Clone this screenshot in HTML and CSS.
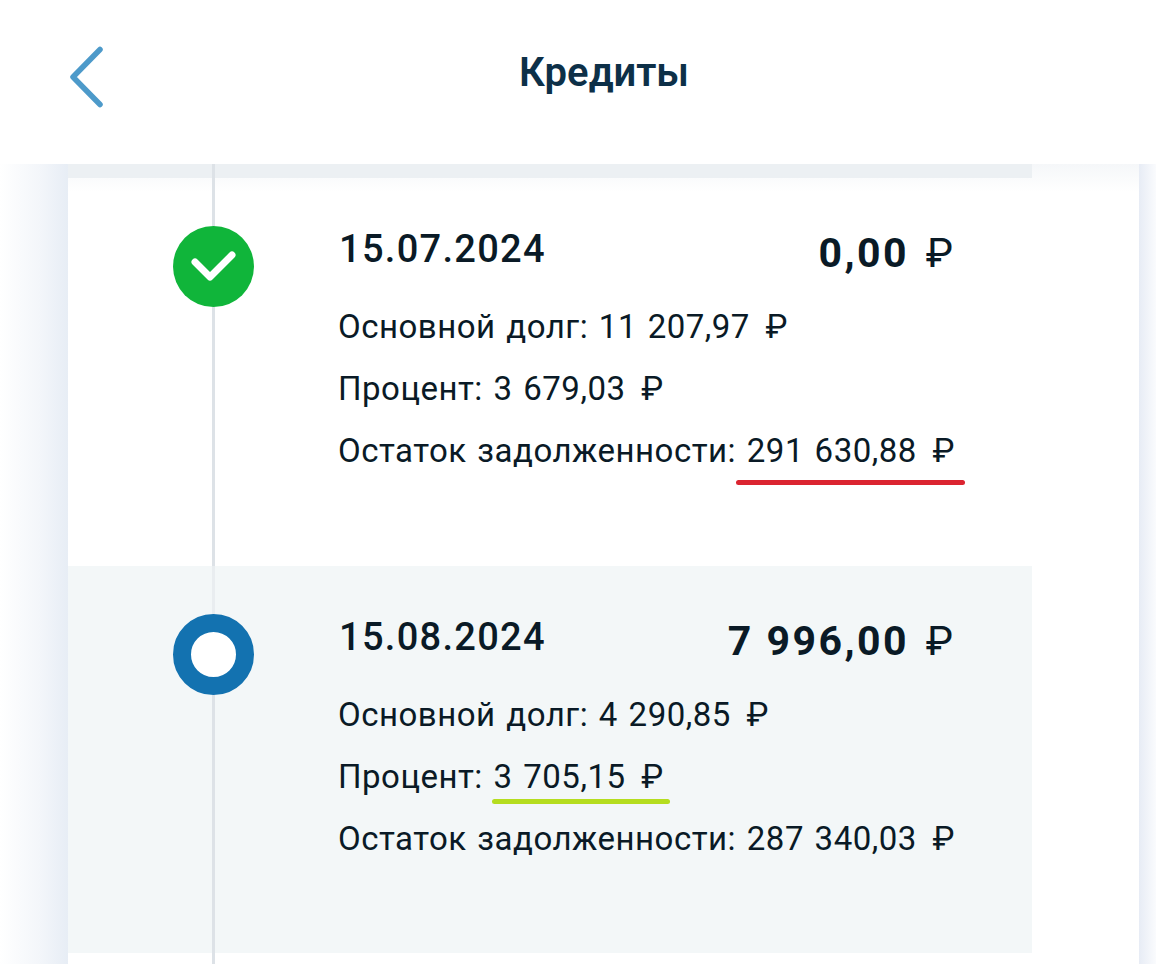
FILE: index.html
```html
<!DOCTYPE html>
<html lang="ru">
<head>
<meta charset="utf-8">
<title>Кредиты</title>
<link rel="stylesheet" href="styles.css">
</head>
<body>
<header class="header">
  <svg class="back" width="36" height="62" viewBox="0 0 36 62" aria-hidden="true"><path d="M32 3.5 L5 31 L32 58.5" fill="none" stroke="#4d9aca" stroke-width="5.5" stroke-linecap="round" stroke-linejoin="round"/></svg>
  <h1 class="title">Кредиты</h1>
</header>
<main class="sheet">
  <div class="panel">
    <div class="timeline"></div>
    <div class="strip"></div>
    <section class="row">
      <div class="marker">
        <svg width="81" height="81" viewBox="0 0 81 81" aria-hidden="true"><circle cx="40.5" cy="40.5" r="40.5" fill="#10b53a"/><path d="M22 36 L37 51 L59 29" fill="none" stroke="#fff" stroke-width="7" stroke-linecap="round" stroke-linejoin="round"/></svg>
      </div>
      <div class="body">
        <div class="top"><span class="date">15.07.2024</span><span class="sum">0,00 <span class="rub">₽</span></span></div>
        <p class="line">Основной долг: 11 207,97 <span class="rub">₽</span></p>
        <p class="line">Процент: 3 679,03 <span class="rub">₽</span></p>
        <p class="line">Остаток задолженности: <span class="mark mark-red">291 630,88 <span class="rub">₽</span></span></p>
      </div>
    </section>
    <section class="row row-active">
      <div class="marker"><span class="ring"></span></div>
      <div class="body">
        <div class="top"><span class="date">15.08.2024</span><span class="sum">7 996,00 <span class="rub">₽</span></span></div>
        <p class="line">Основной долг: 4 290,85 <span class="rub">₽</span></p>
        <p class="line">Процент: <span class="mark mark-green">3 705,15 <span class="rub">₽</span></span></p>
        <p class="line">Остаток задолженности: 287 340,03 <span class="rub">₽</span></p>
      </div>
    </section>
  </div>
</main>
</body>
</html>
```

FILE: styles.css
```css
* { box-sizing: border-box; }
html, body { margin: 0; padding: 0; }
body {
  width: 1156px;
  height: 964px;
  overflow: hidden;
  background: #fff;
  font-family: "Roboto", "Liberation Sans", sans-serif;
  color: #0a1a26;
}
.header {
  height: 164px;
  display: flex;
  align-items: center;
  justify-content: center;
  padding: 0 0 19px 52px;
  position: relative;
  background: #fff;
}
.back { position: absolute; left: 68px; top: 46px; }
.title {
  margin: 0;
  font-size: 40px;
  font-weight: 600;
  color: #0d3048;
}
.sheet {
  height: 800px;
  padding: 0 17px 0 68px;
  background: linear-gradient(to right, #fff 0, #f3f6fa 40px, #e7edf5 68px, #fff 68px);
  position: relative;
}
.sheet::after {
  content: "";
  position: absolute;
  left: 1139px; right: 0; top: 0; bottom: 0;
  background: linear-gradient(to right, #e7ecf5, #fafbfd);
}
.panel {
  height: 100%;
  position: relative;
  background: linear-gradient(to bottom, #f5f7f9 0, #fff 28px);
}
.timeline {
  position: absolute;
  left: 144px; top: 0; bottom: 0;
  width: 3px;
  background: #dde2e7;
  z-index: 1;
}
.strip { height: 14px; width: 964px; background: #ecf0f3; }
.row {
  width: 964px;
  height: 388px;
  display: flex;
}
.row-active { background: #f3f7f8; height: 387px; }
.marker { width: 270px; padding: 48px 0 0 105px; position: relative; z-index: 2; }
.row-active .marker::before {
  content: "";
  position: absolute;
  left: 144px; top: 0;
  width: 3px; height: 48px;
  background: #e9edf0;
}
.marker svg { display: block; }
.ring {
  display: block;
  width: 81px; height: 81px;
  border-radius: 50%;
  border: 18px solid #1372b0;
  background: #fff;
}
.body { width: 615px; padding-top: 50px; }
.top { display: flex; justify-content: space-between; align-items: flex-start; height: 72px; }
.date { font-size: 38px; font-weight: 500; letter-spacing: 1.3px; line-height: 42px; margin-left: 1px; }
.sum { font-size: 41px; font-weight: 700; letter-spacing: 2.5px; line-height: 50px; }
.sum .rub { font-weight: 400; margin-left: 4px; letter-spacing: 0; }
.line {
  margin: 0;
  height: 62px;
  font-size: 33px;
  line-height: 54px;
  letter-spacing: .5px;
  word-spacing: 2px;
  font-weight: 400;
  white-space: pre;
}
.rub { margin-left: 5px; }
.mark { position: relative; }
.mark::after {
  content: "";
  position: absolute;
  height: 5px;
  border-radius: 3px;
}
.mark-red::after { left: -11px; right: -10px; bottom: -15px; background: #db2430; }
.mark-green::after { left: -2px; right: -6px; bottom: -8px; background: #b5dd1f; }
```
